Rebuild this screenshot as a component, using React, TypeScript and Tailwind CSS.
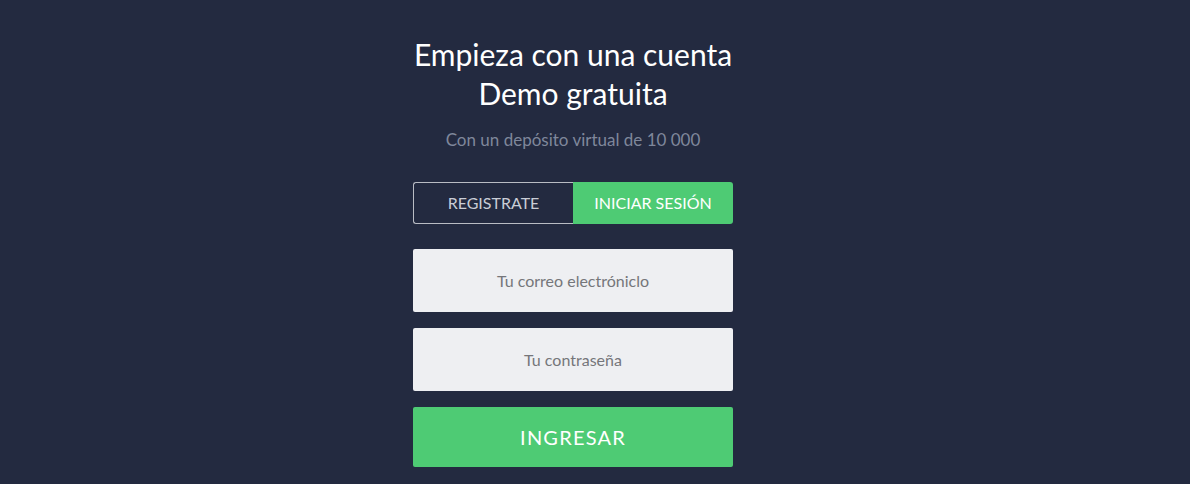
import React, { useState } from 'react';

export default function App() {
  const [tab, setTab] = useState<'register' | 'login'>('login');

  return (
    <div className="min-h-screen bg-[#232a40] flex justify-center pr-[44px] font-['Lato','Liberation_Sans',sans-serif]">
      <div className="w-[320px] flex flex-col items-center pt-[35px]">
        <h1 className="text-[30px] leading-[39px] text-white text-center whitespace-nowrap">
          Empieza con una cuenta
          <br />
          Demo gratuita
        </h1>
        <p className="mt-[15px] text-[17px] leading-[24px] text-[#7f879b] text-center">
          Con un depósito virtual de 10 000
        </p>

        {/* Tabs */}
        <div className="mt-[30px] w-full grid grid-cols-2 h-[42px]">
          <button
            onClick={() => setTab('register')}
            className={`rounded-l-[3px] text-[16px] uppercase ${
              tab === 'register'
                ? 'bg-[#4ecb74] text-white'
                : 'border border-r-0 border-[#b9bcc4] text-[#c9cdd6]'
            }`}
          >
            Registrate
          </button>
          <button
            onClick={() => setTab('login')}
            className={`rounded-r-[3px] text-[16px] uppercase ${
              tab === 'login'
                ? 'bg-[#4ecb74] text-white'
                : 'border border-l-0 border-[#b9bcc4] text-[#c9cdd6]'
            }`}
          >
            Iniciar sesión
          </button>
        </div>

        {/* Form */}
        <form className="mt-[25px] w-full flex flex-col" onSubmit={e => e.preventDefault()}>
          <input
            type="email"
            placeholder="Tu correo electróniclo"
            className="h-[63px] w-full rounded-[2px] bg-[#eeeff2] text-center text-[16px] text-[#555] placeholder:text-[#75767a] outline-none"
          />
          <input
            type="password"
            placeholder="Tu contraseña"
            className="mt-[16px] h-[63px] w-full rounded-[2px] bg-[#eeeff2] text-center text-[16px] text-[#555] placeholder:text-[#75767a] outline-none"
          />
          <button
            type="submit"
            className="mt-[16px] h-[60px] w-full rounded-[2px] bg-[#4ecb74] text-white text-[20px] tracking-[0.06em] uppercase"
          >
            Ingresar
          </button>
        </form>
      </div>
    </div>
  );
}
